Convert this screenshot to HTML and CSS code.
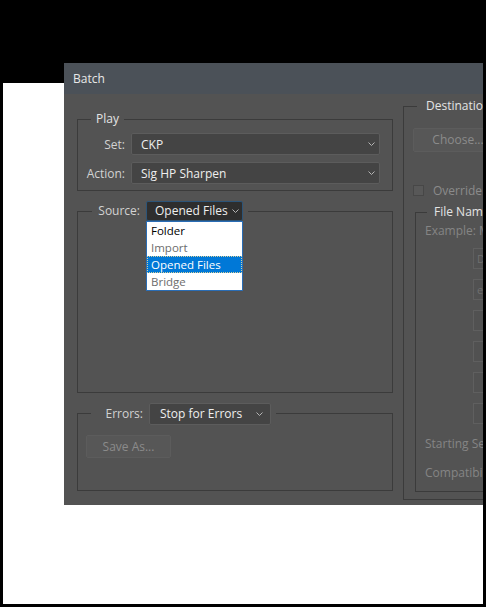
FILE: index.html
```html
<!DOCTYPE html>
<html>
<head>
<meta charset="utf-8">
<title>Batch</title>
<link rel="stylesheet" href="styles.css">
</head>
<body>
<div class="stage">
  <div class="dialog">
    <div class="titlebar">Batch</div>
    <div class="dbody">
      <div class="col-left">
        <div class="group g-play">
          <div class="legend lg-play">Play</div>
          <div class="rows">
            <div class="row">
              <span class="lbl">Set:</span>
              <div class="select s-wide"><span>CKP</span><svg class="chev" width="7" height="4" viewBox="0 0 7 4"><polyline points="0.5,0.5 3.5,3.5 6.5,0.5" fill="none" stroke="#b4b4b4" stroke-width="1"/></svg></div>
            </div>
            <div class="row">
              <span class="lbl">Action:</span>
              <div class="select s-wide"><span>Sig HP Sharpen</span><svg class="chev" width="7" height="4" viewBox="0 0 7 4"><polyline points="0.5,0.5 3.5,3.5 6.5,0.5" fill="none" stroke="#b4b4b4" stroke-width="1"/></svg></div>
            </div>
          </div>
        </div>

        <div class="group g-source">
          <div class="legend legend-ctl lg-src">
            <span class="lbl lbl-src">Source:</span>
            <div class="select-wrap">
              <div class="select s-src"><span>Opened Files</span><svg class="chev" width="7" height="4" viewBox="0 0 7 4"><polyline points="0.5,0.5 3.5,3.5 6.5,0.5" fill="none" stroke="#b4b4b4" stroke-width="1"/></svg></div>
              <ul class="menu">
                <li>Folder</li>
                <li class="dis">Import</li>
                <li class="sel">Opened Files</li>
                <li class="dis">Bridge</li>
              </ul>
            </div>
          </div>
        </div>

        <div class="group g-errors">
          <div class="legend legend-ctl lg-err">
            <span class="lbl">Errors:</span>
            <div class="select s-err"><span>Stop for Errors</span><svg class="chev" width="7" height="4" viewBox="0 0 7 4"><polyline points="0.5,0.5 3.5,3.5 6.5,0.5" fill="none" stroke="#b4b4b4" stroke-width="1"/></svg></div>
          </div>
          <div class="btn btn-save">Save As...</div>
        </div>
      </div>

      <div class="col-right">
        <div class="group g-dest">
          <div class="legend lg-dest">Destination: None</div>
          <div class="btn btn-choose">Choose...</div>
          <div class="check-row"><span class="cb"></span><span>Override Action "Save As" Commands</span></div>
          <div class="group g-fname">
            <div class="legend lg-fn">File Naming</div>
            <div class="dim example">Example: MyFile.gif</div>
            <div class="fields">
              <div class="field">Document Name</div>
              <div class="field">extension</div>
              <div class="field"></div>
              <div class="field"></div>
              <div class="field"></div>
              <div class="field"></div>
            </div>
            <div class="dim serial">Starting Serial#: 1</div>
            <div class="dim compat">Compatibility: Windows</div>
          </div>
        </div>
      </div>
    </div>
  </div>
</div>
</body>
</html>
```

FILE: styles.css
```css
html, body {
  margin: 0;
  padding: 0;
}
body {
  background: #000;
  height: 607px;
  overflow: hidden;
  font-family: "Open Sans", "Noto Sans", sans-serif;
  font-size: 12px;
}
.stage {
  margin: 0 3px;
  height: 604px;
  overflow: hidden;
  box-sizing: border-box;
  padding: 63px 0 0 61px;
  background: linear-gradient(#000 0, #000 83px, #fff 83px, #fff 100%);
}
.dialog {
  width: 640px;
  height: 442px;
  background: #535353;
  overflow: hidden;
}
.titlebar {
  height: 31px;
  line-height: 31px;
  background: #4b5158;
  color: #e8e8e8;
  padding-left: 9px;
}
.dbody {
  display: flex;
  align-items: flex-start;
  gap: 10px;
  padding-left: 13px;
}
.col-left {
  width: 316px;
  flex: none;
  padding-top: 25px;
}
.col-right {
  width: 300px;
  flex: none;
  padding-top: 12px;
}
.group {
  border: 1px solid #3b3b3b;
  box-sizing: border-box;
}
.legend {
  width: fit-content;
  background: #535353;
  height: 16px;
  line-height: 16px;
  padding: 0 5px;
  margin: -9px 0 0 13px;
  color: #e4e4e4;
  white-space: nowrap;
}
.g-play {
  height: 72px;
}
.rows {
  display: flex;
  flex-direction: column;
  gap: 7px;
  margin-top: 6px;
}
.row {
  display: flex;
  align-items: center;
  height: 22px;
}
.lbl {
  width: 47px;
  flex: none;
  text-align: right;
  margin-right: 6px;
  color: #d2d2d2;
  white-space: nowrap;
}
.select {
  display: flex;
  align-items: center;
  justify-content: space-between;
  box-sizing: border-box;
  background: #444444;
  border: 1px solid #5c5c5c;
  border-radius: 2px;
  color: #efefef;
  white-space: nowrap;
}
.chev {
  flex: none;
  display: block;
}
.s-wide {
  width: 249px;
  height: 22px;
  padding: 0 4px 0 9px;
}

.g-source {
  height: 182px;
  margin-top: 20px;
}
.legend-ctl {
  display: flex;
  align-items: center;
}
.lg-src {
  height: 20px;
  margin: -11px 0 0 14px;
}
.lbl-src {
  width: 43px;
}
.select-wrap {
  position: relative;
}
.s-src {
  width: 97px;
  height: 20px;
  padding: 0 3px 0 8px;
  background: #2e2e2e;
  border-color: #2c5478;
}
.menu {
  position: absolute;
  top: 20px;
  left: 0;
  width: 97px;
  box-sizing: border-box;
  margin: 0;
  padding: 0;
  list-style: none;
  background: #fff;
  border: 1px solid #2a6db5;
  font-size: 11.5px;
  z-index: 2;
}
.menu li {
  height: 17px;
  line-height: 17px;
  padding-left: 4px;
  color: #000;
  box-sizing: border-box;
  white-space: nowrap;
}
.menu li.dis {
  color: #6d6d6d;
}
.menu li.sel {
  background: #0078d7;
  color: #fff;
  outline: 1px dotted #d9d09a;
  outline-offset: -1px;
}

.g-errors {
  height: 78px;
  margin-top: 20px;
}
.lg-err {
  height: 22px;
  margin: -11px 0 0 13px;
}
.s-err {
  width: 122px;
  height: 22px;
  padding: 0 7px 0 10px;
}
.btn {
  box-sizing: border-box;
  background: #575757;
  border: 1px solid #5c5c5c;
  border-radius: 2px;
  color: #8b8b8b;
  text-align: center;
  white-space: nowrap;
}
.btn-save {
  width: 85px;
  height: 23px;
  line-height: 21px;
  margin: 10px 0 0 8px;
}

.g-dest {
  height: 394px;
}
.lg-dest {
  padding: 0 5px 0 9px;
}
.btn-choose {
  width: 90px;
  height: 24px;
  line-height: 22px;
  margin: 14px 0 0 9px;
}
.check-row {
  display: flex;
  align-items: center;
  gap: 9px;
  height: 16px;
  margin: 30px 0 0 9px;
  color: #8b8b8b;
  white-space: nowrap;
}
.cb {
  width: 11px;
  height: 11px;
  flex: none;
  box-sizing: border-box;
  border: 1px solid #474747;
  background: #585858;
}
.g-fname {
  width: 280px;
  height: 280px;
  margin: 14px 0 0 11px;
}
.lg-fn {
  margin-left: 11px;
  padding: 0 5px 0 7px;
}
.dim {
  color: #858585;
  line-height: 16px;
  padding-left: 9px;
  white-space: nowrap;
}
.example {
  margin-top: 3px;
}
.fields {
  display: flex;
  flex-direction: column;
  gap: 10px;
  margin: 9px 0 0 57px;
}
.field {
  width: 110px;
  height: 21px;
  box-sizing: border-box;
  border: 1px solid #5f5f5f;
  background: #515151;
  color: #6f6f6f;
  font-size: 11px;
  line-height: 19px;
  padding-left: 3px;
  overflow: hidden;
  white-space: nowrap;
}
.serial {
  margin-top: 12px;
}
.compat {
  margin-top: 13px;
}
```
